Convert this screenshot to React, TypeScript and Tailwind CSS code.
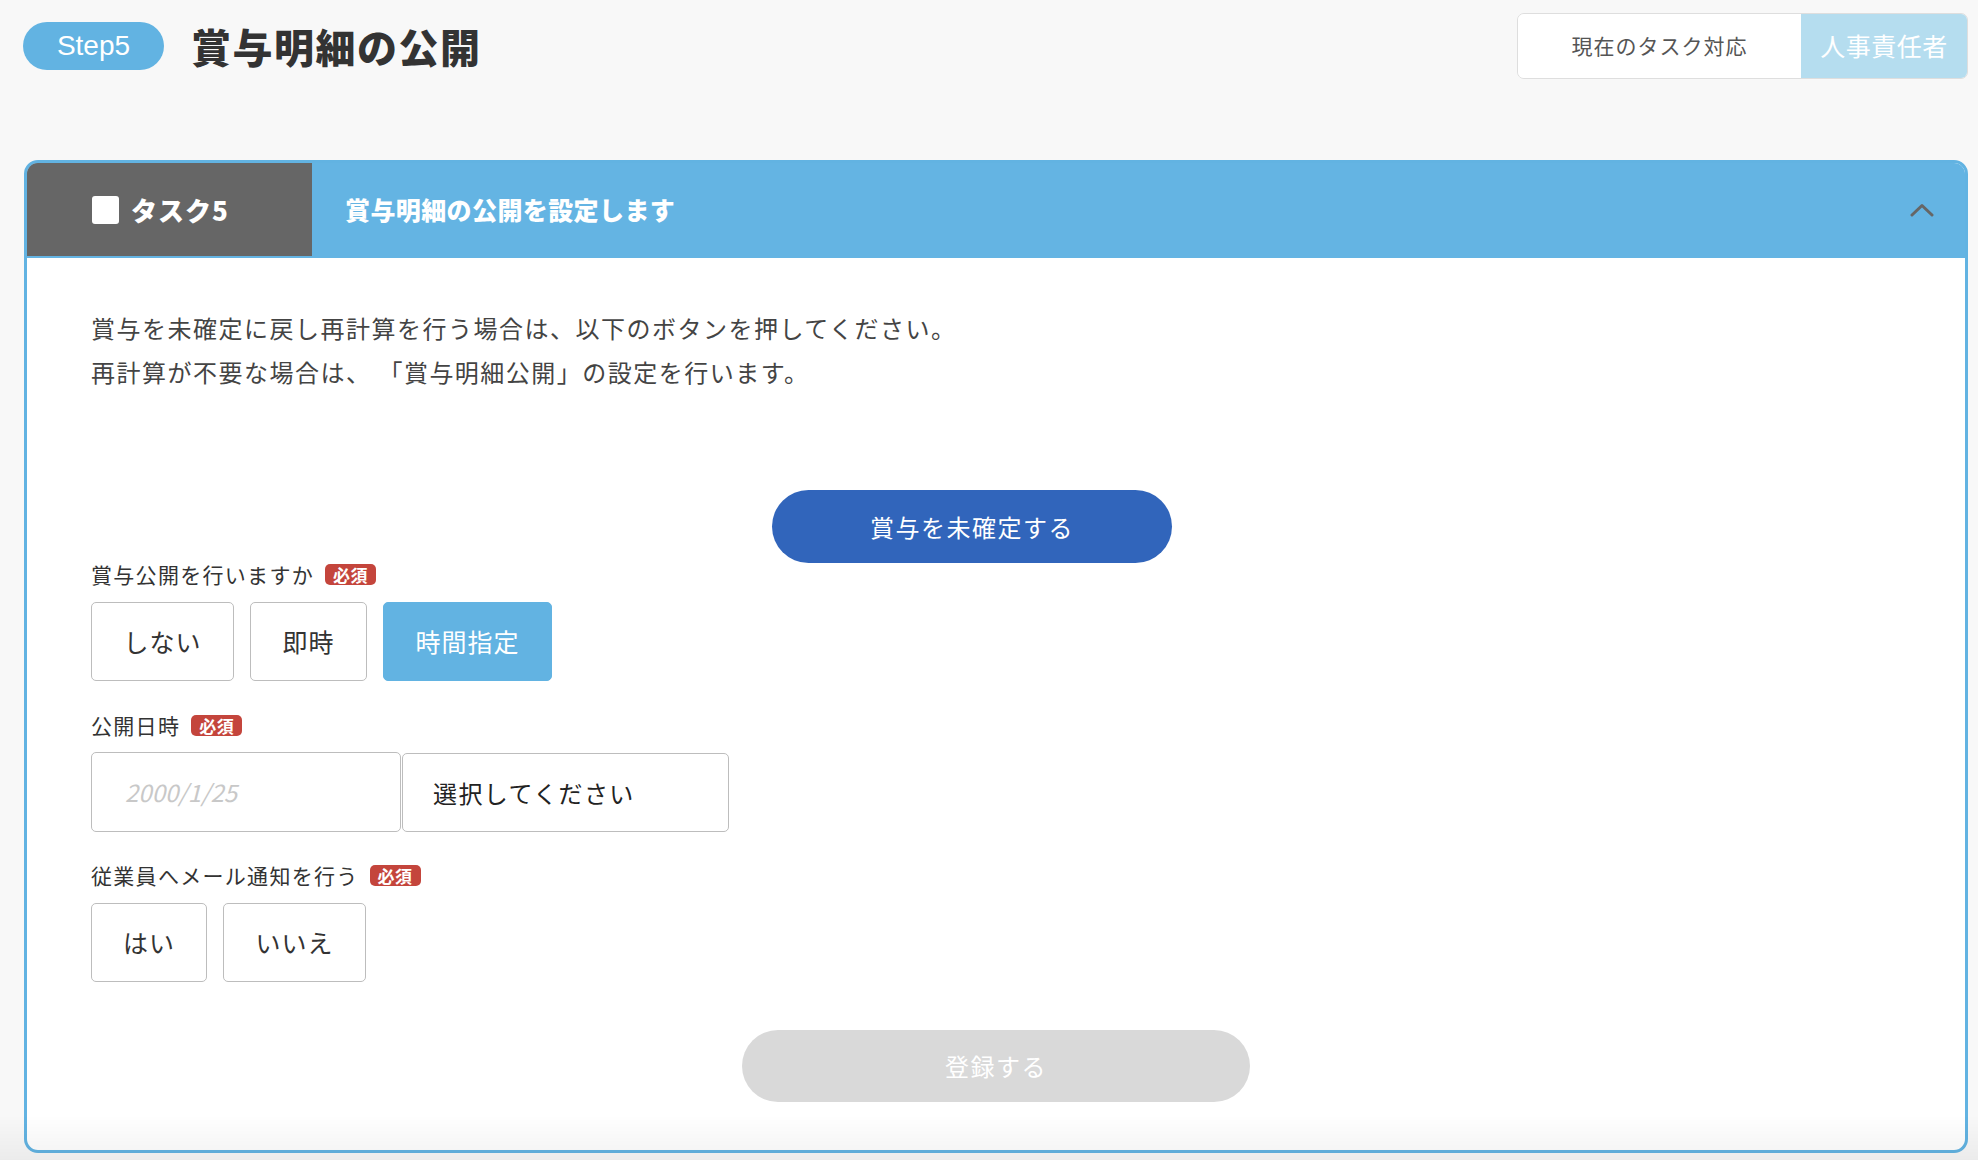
const jp = '[font-family:"Noto_Sans_CJK_JP","Noto_Sans",sans-serif]'

function Required() {
  return (
    <span className="ml-[11px] inline-flex h-[21px] w-[51px] items-center justify-center rounded-[5px] bg-[#c4453c] text-[17px] font-bold leading-none tracking-[0.5px] text-white">
      必須
    </span>
  )
}

function FieldLabel({ children }: { children: string }) {
  return (
    <div className="flex h-[22px] items-center text-[21px] leading-none tracking-[1.3px] text-[#333]">
      <span>{children}</span>
      <Required />
    </div>
  )
}

function Choice({ label, width, active }: { label: string; width: string; active?: boolean }) {
  return (
    <button
      type="button"
      className={
        active
          ? `flex h-[79px] ${width} items-center justify-center rounded-[5px] border border-[#62b3e2] bg-[#62b3e2] text-[25px] tracking-[1px] text-white`
          : `flex h-[79px] ${width} items-center justify-center rounded-[5px] border border-[#bdbdbd] bg-white text-[25px] tracking-[1px] text-[#333]`
      }
    >
      {label}
    </button>
  )
}

export default function App() {
  return (
    <div className={`min-h-[1160px] w-full bg-[#f8f8f8] pl-[24px] pr-[10px] pt-[13px] ${jp}`}>
      {/* page header */}
      <div className="flex h-[66px] items-center justify-between">
        <div className="flex items-center">
          <span className='-ml-[1px] flex h-[48px] w-[141px] items-center justify-center rounded-full bg-[#62b3e2] text-[28px] leading-none text-white [font-family:"Liberation_Sans",Arial,sans-serif]'>
            Step5
          </span>
          <h1 className="ml-[27px] text-[40px] font-black leading-none tracking-[1.5px] text-[#333]">
            賞与明細の公開
          </h1>
        </div>
        <div className="flex h-[66px] overflow-hidden rounded-[7px] border border-[#dedede]">
          <div className="flex w-[283px] items-center justify-center bg-white text-[21px] tracking-[1px] text-[#555]">
            現在のタスク対応
          </div>
          <div className="flex w-[166px] items-center justify-center bg-[#b5ddef] text-[25px] tracking-[0.5px] text-white">
            人事責任者
          </div>
        </div>
      </div>

      {/* task card */}
      <div className="mt-[81px] overflow-hidden rounded-[14px] border-[3px] border-[#62b3e2] bg-white">
        <div className="flex h-[95px] items-stretch bg-[#64b4e3] pb-[2px]">
          <div className="flex w-[285px] items-center bg-[#666666] pl-[65px]">
            <span className="h-[28px] w-[27px] rounded-[3px] bg-white" />
            <span className="ml-[12px] text-[26px] font-black leading-none tracking-[1px] text-white">タスク5</span>
          </div>
          <div className="flex flex-1 items-center justify-between pl-[33px] pr-[31px]">
            <span className="text-[25px] font-black leading-none tracking-[0.4px] text-white">
              賞与明細の公開を設定します
            </span>
            <svg width="24" height="14" viewBox="0 0 24 14" fill="none">
              <polyline points="2,12 12,2.5 22,12" stroke="#666" strokeWidth="3" strokeLinecap="round" strokeLinejoin="round" />
            </svg>
          </div>
        </div>

        <div className="px-[64px] pb-[48px] pt-[48px]">
          <p className="text-[24px] leading-[44px] tracking-[1.5px] text-[#444]">
            賞与を未確定に戻し再計算を行う場合は、以下のボタンを押してください。
            <br />
            再計算が不要な場合は、 「賞与明細公開」の設定を行います。
          </p>

          <div className="mt-[96px] flex justify-center pr-[48px]">
            <button
              type="button"
              className="h-[73px] w-[400px] rounded-full bg-[#3165bb] text-[24px] tracking-[1.5px] text-white"
            >
              賞与を未確定する
            </button>
          </div>

          <div className="flex flex-col">
            <FieldLabel>賞与公開を行いますか</FieldLabel>
            <div className="mt-[17px] flex gap-[16px]">
              <Choice label="しない" width="w-[143px]" />
              <Choice label="即時" width="w-[117px]" />
              <Choice label="時間指定" width="w-[169px]" active />
            </div>

            <div className="mt-[33px]">
              <FieldLabel>公開日時</FieldLabel>
            </div>
            <div className="mt-[16px] flex">
              <div className="flex h-[80px] w-[310px] items-center rounded-[5px] border border-[#bdbdbd] bg-white pl-[33px] text-[24px] italic text-[#c8c8c8]">
                2000/1/25
              </div>
              <div className="ml-[1px] flex h-[79px] w-[327px] items-center self-end rounded-[5px] border border-[#bdbdbd] bg-white pl-[30px] text-[24px] tracking-[1.4px] text-[#222]">
                選択してください
              </div>
            </div>

            <div className="mt-[32px]">
              <FieldLabel>従業員へメール通知を行う</FieldLabel>
            </div>
            <div className="mt-[17px] flex gap-[16px]">
              <Choice label="はい" width="w-[116px]" />
              <Choice label="いいえ" width="w-[143px]" />
            </div>
          </div>

          <div className="mt-[48px] flex justify-center">
            <button
              type="button"
              className="h-[72px] w-[508px] rounded-full bg-[#d9d9d9] text-[24px] tracking-[1.5px] text-white"
            >
              登録する
            </button>
          </div>
        </div>
      </div>

      {/* soft fade at the bottom edge of the viewport */}
      <div className="pointer-events-none fixed inset-x-0 bottom-0 h-[45px] bg-gradient-to-b from-transparent to-black/[0.05]" />
    </div>
  )
}
